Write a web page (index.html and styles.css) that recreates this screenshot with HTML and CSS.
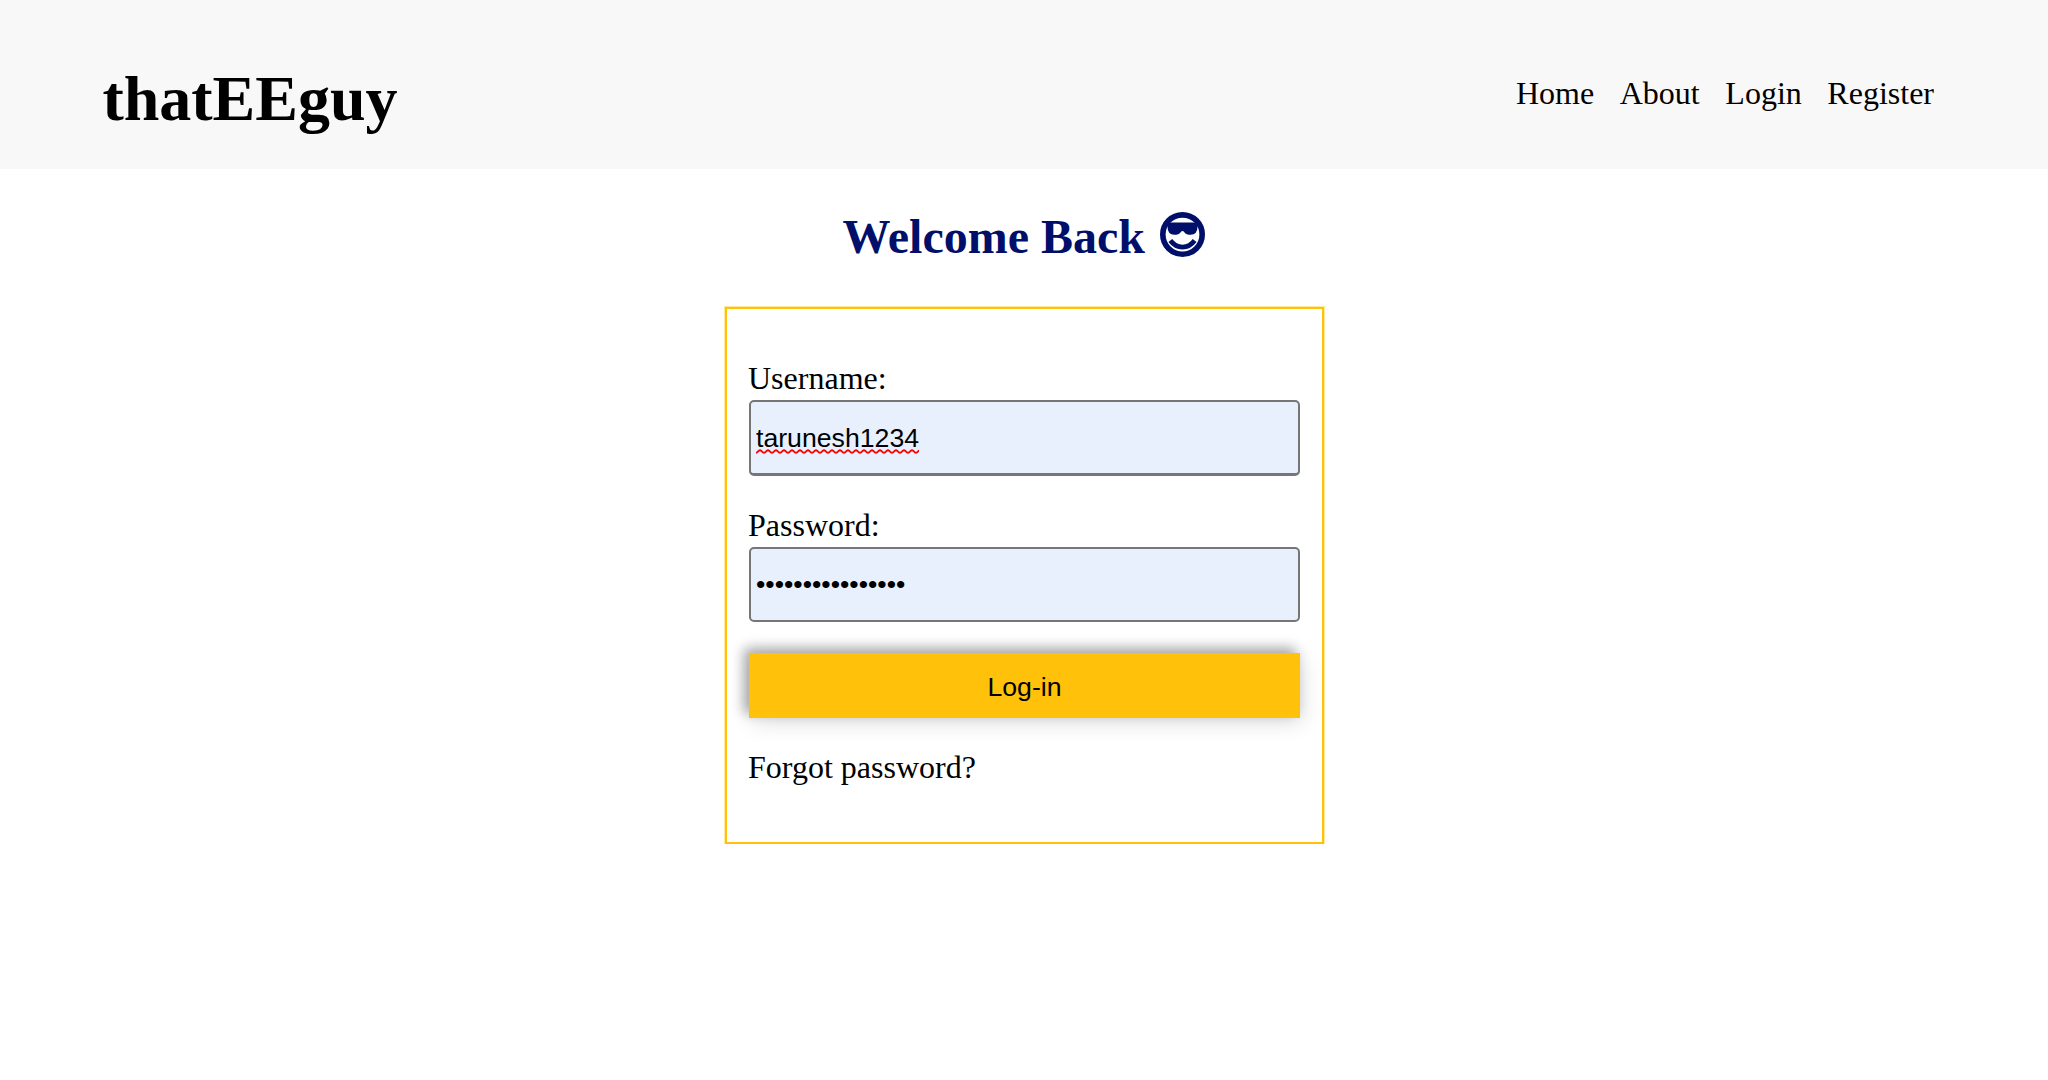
FILE: index.html
```html
<!DOCTYPE html>
<html lang="en">
<head>
<meta charset="utf-8">
<title>thatEEguy</title>
<link rel="stylesheet" href="styles.css">
</head>
<body>
<header class="header">
  <h1 class="logo">thatEEguy</h1>
  <nav class="nav"><a>Home</a><a>About</a><a>Login</a><a>Register</a></nav>
</header>
<main class="main">
  <h2 class="title">Welcome Back
    <svg class="face" viewBox="0 0 496 496" aria-hidden="true">
      <circle cx="248" cy="248" r="217" fill="none" stroke="currentColor" stroke-width="62"/>
      <path fill="currentColor" d="M70 116H426L414 160Q412 252 338 252Q290 252 268 222Q257 209 248 209Q239 209 228 222Q206 252 158 252Q84 252 82 160Z"/>
      <path fill="none" stroke="currentColor" stroke-width="52" d="M114 314Q168 386 248 386Q328 386 382 314"/>
    </svg>
  </h2>
  <form class="card">
    <label class="label" for="user">Username:</label>
    <div class="field field-user" id="user"><span class="misspelled">tarunesh1234</span></div>
    <label class="label" for="pass">Password:</label>
    <input class="field" id="pass" type="password" value="abcdefghijklmnop">
    <button class="submit" type="button">Log-in</button>
    <a class="forgot">Forgot password?</a>
  </form>
</main>
</body>
</html>
```
FILE: styles.css
```css
* { box-sizing: border-box; }
body {
  margin: 0;
  background: #fff;
  color: #000;
  font-family: "Liberation Serif", serif;
  font-size: 32px;
}
.header {
  height: 169px;
  padding: 62px 114px 0 102.4px;
  display: flex;
  justify-content: space-between;
  background: #f8f8f8;
}
.logo { margin: 0; font-size: 64px; line-height: 74px; }
.nav { display: flex; gap: 25.6px; padding-top: 13px; line-height: 37px; }
.main { display: flex; flex-direction: column; align-items: center; }
.title {
  display: flex;
  align-items: center;
  gap: 14.5px;
  height: 56px;
  margin: 40px 0 42px;
  font-size: 48px;
  line-height: 56px;
  color: #00106a;
}
.face { width: 45px; height: 45px; margin: -5px 1px 0 0; }
.card {
  width: 599px;
  height: 537px;
  margin-left: 1px;
  padding: 51px 21px 0;
  display: flex;
  flex-direction: column;
  border: 2px solid #fec20a;
  box-shadow: 0 0 0 1px rgba(254, 194, 10, .4);
}
.label, .forgot { line-height: 37px; }
.field {
  width: 551px;
  height: 75px;
  margin: 3px 0 31px 1px;
  padding: 0 5px;
  border: 2px solid #767676;
  border-radius: 5px;
  background: #e8f0fe;
  color: #000;
  font: 26.667px/71px "Liberation Sans", sans-serif;
}
.field-user { height: 76px; border-bottom-width: 3px; line-height: 73px; }
.misspelled {
  padding-bottom: 1px;
  background: url("data:image/svg+xml,%3Csvg xmlns='http://www.w3.org/2000/svg' width='8' height='5'%3E%3Cpath d='M-4 1.2C-2 1.2 -2 3.8 0 3.8S2 1.2 4 1.2S6 3.8 8 3.8S10 1.2 12 1.2' fill='none' stroke='red' stroke-width='2'/%3E%3C/svg%3E") repeat-x left bottom;
}
.submit {
  width: 551px;
  height: 65px;
  margin-left: 1px;
  padding: 4px 0 0;
  border: 0;
  background: #ffc10a;
  color: #000;
  font: 26.667px "Liberation Sans", sans-serif;
  box-shadow: -5px -5px 12px rgba(0, 0, 0, .33), 3px 5px 22px rgba(0, 0, 0, .12);
}
.forgot { margin-top: 31px; }
```
